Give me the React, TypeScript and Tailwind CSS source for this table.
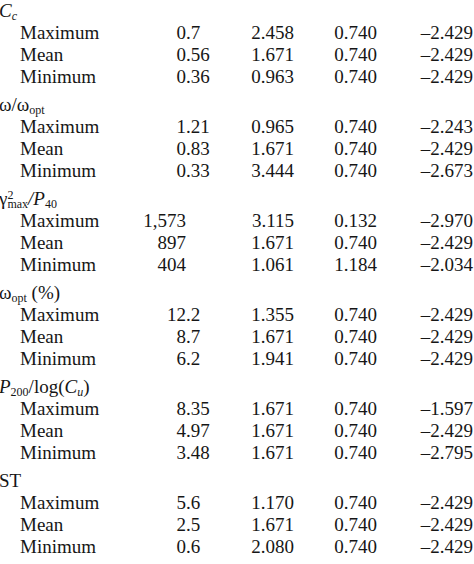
import type { ReactNode } from "react";

type Row = [string, string, string, string, string];

type Group = {
  head: ReactNode;
  rows: Row[];
};

const groups: Group[] = [
  {
    head: (
      <>
        <i>C</i>
        <sub className="text-[12px] italic">c</sub>
      </>
    ),
    rows: [
      ["Maximum", "0.7", "2.458", "0.740", "–2.429"],
      ["Mean", "0.56", "1.671", "0.740", "–2.429"],
      ["Minimum", "0.36", "0.963", "0.740", "–2.429"],
    ],
  },
  {
    head: (
      <>
        ω/ω<sub className="text-[12px]">opt</sub>
      </>
    ),
    rows: [
      ["Maximum", "1.21", "0.965", "0.740", "–2.243"],
      ["Mean", "0.83", "1.671", "0.740", "–2.429"],
      ["Minimum", "0.33", "3.444", "0.740", "–2.673"],
    ],
  },
  {
    head: (
      <>
        γ<sup className="text-[12px]">2</sup>
        <sub className="ml-[-6px] text-[12px]">max</sub>
        <i>/P</i>
        <sub className="text-[12px]">40</sub>
      </>
    ),
    rows: [
      ["Maximum", "1,573", "3.115", "0.132", "–2.970"],
      ["Mean", "897", "1.671", "0.740", "–2.429"],
      ["Minimum", "404", "1.061", "1.184", "–2.034"],
    ],
  },
  {
    head: (
      <>
        ω<sub className="text-[12px]">opt</sub> (%)
      </>
    ),
    rows: [
      ["Maximum", "12.2", "1.355", "0.740", "–2.429"],
      ["Mean", "8.7", "1.671", "0.740", "–2.429"],
      ["Minimum", "6.2", "1.941", "0.740", "–2.429"],
    ],
  },
  {
    head: (
      <>
        <i>P</i>
        <sub className="text-[12px]">200</sub>/log(<i>C</i>
        <sub className="text-[12px] italic">u</sub>)
      </>
    ),
    rows: [
      ["Maximum", "8.35", "1.671", "0.740", "–1.597"],
      ["Mean", "4.97", "1.671", "0.740", "–2.429"],
      ["Minimum", "3.48", "1.671", "0.740", "–2.795"],
    ],
  },
  {
    head: <>ST</>,
    rows: [
      ["Maximum", "5.6", "1.170", "0.740", "–2.429"],
      ["Mean", "2.5", "1.671", "0.740", "–2.429"],
      ["Minimum", "0.6", "2.080", "0.740", "–2.429"],
    ],
  },
];

function DataRow({ row }: { row: Row }) {
  const [label, first, second, third, fourth] = row;
  const dot = first.indexOf(".");
  const whole = dot < 0 ? first : first.slice(0, dot);
  const frac = dot < 0 ? "" : first.slice(dot);

  return (
    <div className="grid h-[22px] grid-cols-[130px_56px_34px_74px_83px_96px] whitespace-nowrap">
      <span className="pl-[20px]">{label}</span>
      <span className="text-right">{whole}</span>
      <span>{frac}</span>
      <span className="text-right">{second}</span>
      <span className="text-right">{third}</span>
      <span className="text-right">{fourth}</span>
    </div>
  );
}

export default function App() {
  return (
    <div className="h-[564px] w-[474px] overflow-hidden bg-white font-['Liberation_Serif','Times_New_Roman',serif] text-[19px] leading-[22px] text-[#161616]">
      {groups.map((g, i) => (
        <div key={i} className="mb-[6px]">
          <div className="ml-[-1px] h-[22px] whitespace-nowrap">{g.head}</div>
          {g.rows.map((r) => (
            <DataRow key={r[0]} row={r} />
          ))}
        </div>
      ))}
    </div>
  );
}
